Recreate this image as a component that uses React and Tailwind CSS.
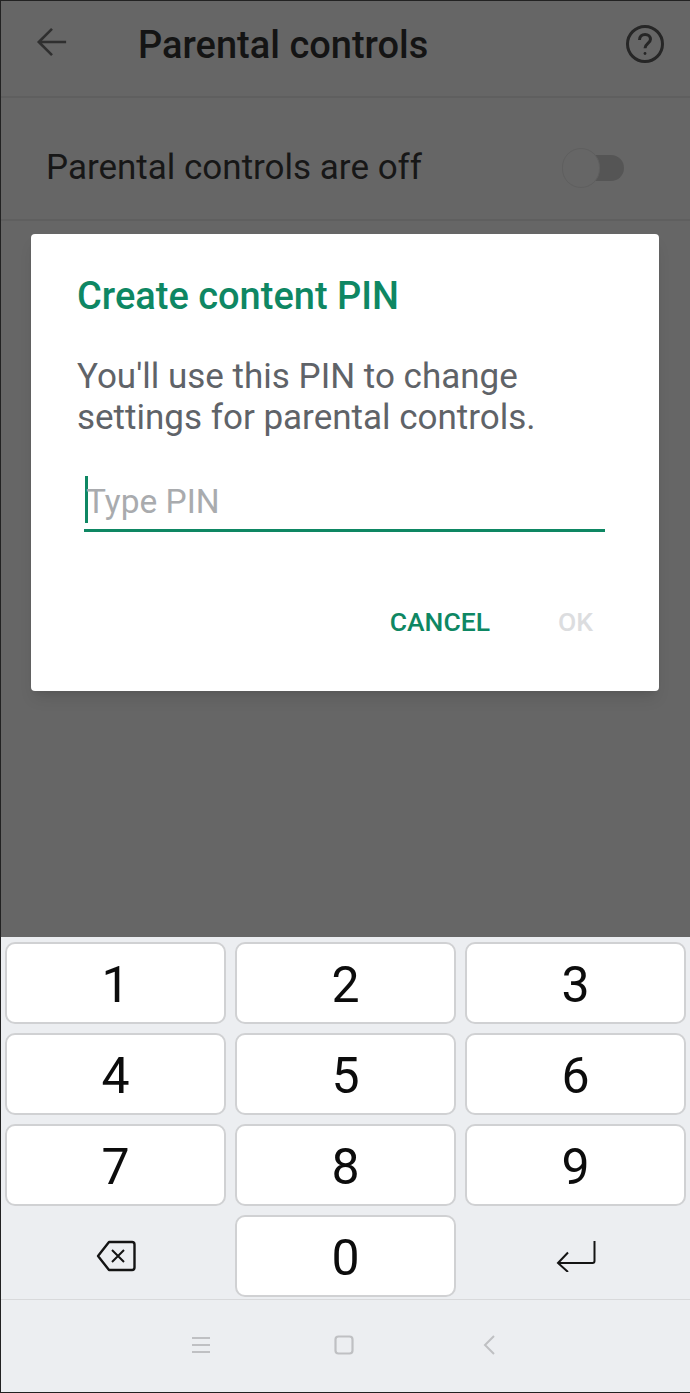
import React from "react";

const keys = ["1", "2", "3", "4", "5", "6", "7", "8", "9"];

const Key = ({ label }) => (
  <div className="h-[82px] pt-[4px] flex items-center justify-center bg-white rounded-[10px] border-2 border-[#d0d1d3] text-[50px] leading-none text-[#0c0c0c]">
    {label}
  </div>
);

const App = () => {
  return (
    <div className="relative w-[690px] h-[1393px] overflow-hidden flex flex-col border-l border-t border-b border-[#222222] font-['Roboto',sans-serif]">
      {/* Dimmed settings page */}
      <div className="h-[936px] bg-[#666666] flex flex-col">
        <div className="h-[97px] flex items-center border-b-2 border-[#5f5f5f] pl-[35px] pr-[25px] pb-[7px]">
          <svg className="mb-[6px]" width="32" height="32" viewBox="0 0 34 34" fill="none" stroke="#2f2f2f" strokeWidth="2.800">
            <path d="M32 17H3M17 3L3 17l14 14" />
          </svg>
          <div className="ml-[70px] flex-1 text-[38px] font-medium text-[#141414] leading-none">Parental controls</div>
          <svg className="mb-[2px]" width="40" height="40" viewBox="0 0 40 40" fill="none" stroke="#262626" strokeWidth="3">
            <circle cx="20" cy="20" r="17.500" />
            <path d="M14.500 16c0-3.400 2.400-5.600 5.600-5.600s5.400 2 5.400 4.900c0 4-5.500 4.400-5.500 9" />
            <circle cx="20" cy="29.500" r="1.400" fill="#262626" stroke="none" />
          </svg>
        </div>
        <div className="h-[123px] flex items-center border-b-2 border-[#5f5f5f] pl-[45px] pr-[66px] pt-[18px]">
          <div className="flex-1 text-[35px] text-[#171717] leading-none">Parental controls are off</div>
          <div className="relative w-[60px] h-[26px] rounded-full bg-[#555555]">
            <div className="absolute -left-[2px] -top-[7px] w-[38px] h-[40px] rounded-full bg-[#666666] border border-[#5f5f5f]"></div>
          </div>
        </div>
      </div>

      {/* Keyboard */}
      <div className="flex-1 bg-[#eceef1] flex flex-col">
        <div className="h-[363px] pt-[5px] pl-[4px] pr-[4px] border-b border-[#d8d9db]">
          <div className="grid grid-cols-3 gap-x-[9px] gap-y-[9px]">
            {keys.map((k) => (
              <Key key={k} label={k} />
            ))}
            <div className="h-[82px] flex items-center justify-center">
              <svg width="40" height="32" viewBox="0 0 40 32" fill="none" stroke="#141414" strokeWidth="2.400" strokeLinejoin="round">
                <path d="M13 2h23a2.500 2.500 0 0 1 2.500 2.500v23a2.500 2.500 0 0 1-2.500 2.500H13L2 16z" />
                <path d="M16 10l12 12M28 10L16 22" strokeWidth="2" />
              </svg>
            </div>
            <Key label="0" />
            <div className="h-[82px] flex items-center justify-center">
              <svg width="40" height="32" viewBox="0 0 40 32" fill="none" stroke="#141414" strokeWidth="2">
                <path d="M38.500 1v20a2 2 0 0 1-2 2H2M12 12.500L2 23l10 9" />
              </svg>
            </div>
          </div>
        </div>
        <div className="flex-1 flex items-center justify-center pb-[2px] pr-[8px]">
          <svg width="20" height="18" viewBox="0 0 20 18" fill="none" stroke="#bfc0c3" strokeWidth="2">
            <path d="M1 2h18M1 9h18M1 16h18" />
          </svg>
          <svg className="ml-[123px]" width="20" height="20" viewBox="0 0 20 20" fill="none" stroke="#bfc0c3" strokeWidth="2.200">
            <rect x="1.500" y="1.500" width="17" height="17" rx="3" />
          </svg>
          <svg className="ml-[129px] mr-[-2px]" width="12" height="20" viewBox="0 0 12 20" fill="none" stroke="#bfc0c3" strokeWidth="2">
            <path d="M11 1L2 10l9 9" />
          </svg>
        </div>
      </div>

      {/* PIN dialog */}
      <div className="absolute left-[30px] top-[233px] w-[628px] h-[457px] bg-white rounded-[4px] shadow-lg pt-[40px] pl-[46px] pr-[54px]">
        <div className="text-[38px] font-medium text-[#0e8763] leading-[44px]">Create content PIN</div>
        <p className="mt-[38px] text-[35px] text-[#5f6368] leading-[41px]">
          You'll use this PIN to change
          <br />
          settings for parental controls.
        </p>
        <div className="mt-[36px] ml-[7px] h-[58px] flex items-center border-b-[3px] border-[#0e8763]">
          <div className="ml-[1px] mb-[4px] w-[3px] h-[47px] bg-[#0e8763]"></div>
          <span className="-ml-[2px] text-[33.500px] text-[#a9abae] leading-none">Type PIN</span>
        </div>
        <div className="mt-[77px] flex justify-end items-center text-[26.500px] font-medium leading-none">
          <span className="text-[#0e8763]">CANCEL</span>
          <span className="ml-[68px] mr-[12px] text-[#dcdddf]">OK</span>
        </div>
      </div>
    </div>
  );
};

export default App;
